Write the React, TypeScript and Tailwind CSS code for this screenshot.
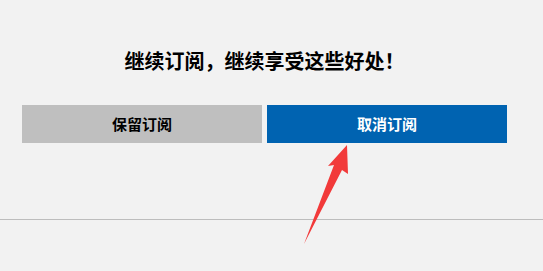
export default function App() {
  return (
    <div className="relative w-[543px] h-[271px] overflow-hidden bg-[#f2f2f2] font-['Noto_Sans_CJK_SC',sans-serif]">
      <div className="ml-[22px] w-[485px] pt-[47px]">
        <h1 className="text-center text-[20px] leading-[28px] font-bold text-black">
          继续订阅，继续享受这些好处！
        </h1>
        <div className="mt-[30px] flex gap-[5px]">
          <button className="h-[38px] w-[240px] bg-[#bfbfbf] text-[15px] font-bold text-black">
            保留订阅
          </button>
          <button className="h-[38px] w-[240px] bg-[#0063b1] text-[15px] font-bold text-white">
            取消订阅
          </button>
        </div>
      </div>
      <div className="mt-[76px] h-px bg-[#bdbdbd]" />

      {/* annotation arrow */}
      <svg className="absolute left-0 top-0" width="543" height="271" viewBox="0 0 543 271">
        <polygon points="347,145 328,166 334,165 304,244 342,170 348,174" fill="#f23a3a" />
      </svg>
    </div>
  );
}
